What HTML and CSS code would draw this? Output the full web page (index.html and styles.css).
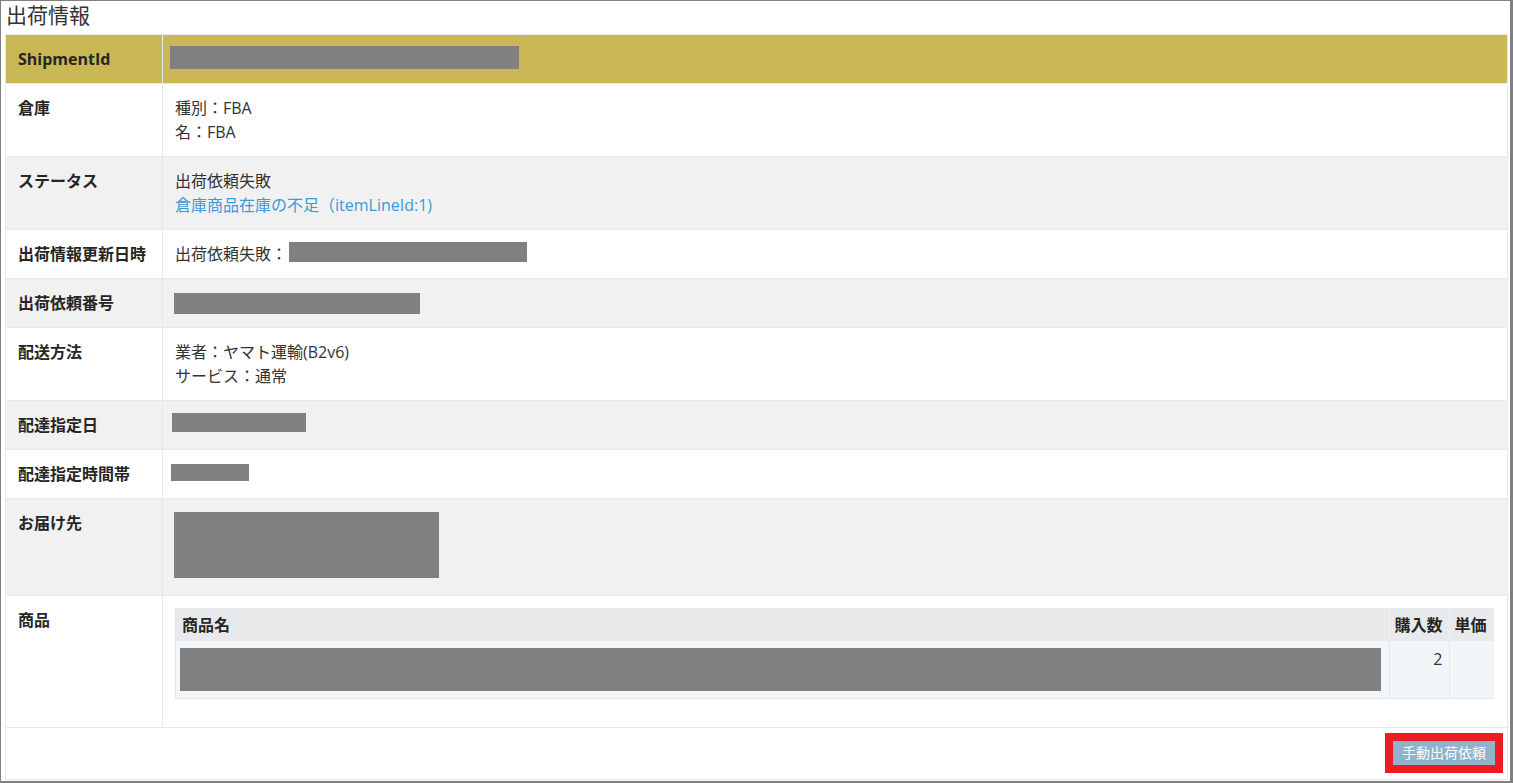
FILE: index.html
```html
<!DOCTYPE html>
<html lang="ja">
<head>
<meta charset="utf-8">
<title>出荷情報</title>
<link rel="stylesheet" href="styles.css">
</head>
<body>
<div class="frame">
  <h2 class="title">出荷情報</h2>
  <table class="info">
    <tr class="head-row">
      <th>ShipmentId</th>
      <td><span class="mask mask-shipment"></span></td>
    </tr>
    <tr>
      <th>倉庫</th>
      <td>種別：FBA<br>名：FBA</td>
    </tr>
    <tr class="alt">
      <th>ステータス</th>
      <td>出荷依頼失敗<br><a class="link" href="#">倉庫商品在庫の不足（itemLineId:1)</a></td>
    </tr>
    <tr>
      <th>出荷情報更新日時</th>
      <td>出荷依頼失敗：<span class="mask mask-updated"></span></td>
    </tr>
    <tr class="alt">
      <th>出荷依頼番号</th>
      <td><span class="mask mask-number"></span></td>
    </tr>
    <tr>
      <th>配送方法</th>
      <td>業者：ヤマト運輸(B2v6)<br>サービス：通常</td>
    </tr>
    <tr class="alt">
      <th>配達指定日</th>
      <td><span class="mask mask-date"></span></td>
    </tr>
    <tr>
      <th>配達指定時間帯</th>
      <td><span class="mask mask-time"></span></td>
    </tr>
    <tr class="alt">
      <th>お届け先</th>
      <td><span class="mask mask-address"></span></td>
    </tr>
    <tr>
      <th>商品</th>
      <td>
        <table class="items">
          <colgroup>
            <col>
            <col class="col-qty">
            <col class="col-price">
          </colgroup>
          <thead>
            <tr>
              <th>商品名</th>
              <th>購入数</th>
              <th>単価</th>
            </tr>
          </thead>
          <tbody>
            <tr>
              <td class="name-cell"><span class="mask mask-item"></span></td>
              <td class="num">2</td>
              <td></td>
            </tr>
          </tbody>
        </table>
      </td>
    </tr>
    <tr class="foot-row">
      <td colspan="2"><button class="btn-manual" type="button">手動出荷依頼</button></td>
    </tr>
  </table>
</div>
</body>
</html>
```

FILE: styles.css
```css
html, body {
  margin: 0;
  padding: 0;
  background: #ffffff;
}

body {
  font-family: "Open Sans", "Noto Sans CJK JP", sans-serif;
  color: #333333;
  font-size: 16px;
  line-height: 24px;
}

.frame {
  width: 1513px;
  height: 783px;
  box-sizing: border-box;
  border-style: solid;
  border-color: #808080;
  border-width: 1px 3px 2px 1px;
  padding: 0 2px 0 4px;
  overflow: hidden;
}

.title {
  margin: 0 0 5px 0;
  padding-left: 1px;
  font-size: 21px;
  line-height: 28px;
  font-weight: normal;
  color: #333333;
}

.info {
  width: 1503px;
  border-collapse: collapse;
  table-layout: fixed;
}

.info > tbody > tr > th,
.info > tbody > tr > td {
  border: 1px solid #e9e9e9;
  padding: 12px;
  vertical-align: top;
  text-align: left;
}

.info > tbody > tr > th {
  width: 132px;
  font-weight: bold;
  color: #262626;
}

.info > tbody > tr.alt > th,
.info > tbody > tr.alt > td {
  background: #f1f1f1;
}

.info > tbody > tr.head-row > th,
.info > tbody > tr.head-row > td {
  background: #cab857;
  vertical-align: middle;
}

.link {
  color: #3d9ad6;
  text-decoration: none;
}

.mask {
  display: block;
  background: #808080;
}

.mask-shipment {
  width: 349px;
  height: 23px;
  margin: -1px 0 2px -5px;
}

.mask-updated {
  display: inline-block;
  vertical-align: top;
  width: 238px;
  height: 20px;
  margin: 0 0 0 2px;
}

.mask-number {
  width: 246px;
  height: 21px;
  margin: 2px 0 1px -1px;
}

.mask-date {
  width: 134px;
  height: 19px;
  margin: 0 0 5px -3px;
}

.mask-time {
  width: 78px;
  height: 17px;
  margin: 2px 0 5px -4px;
}

.mask-address {
  width: 265px;
  height: 66px;
  margin: 1px 0 5px -1px;
}

.items {
  width: 1319px;
  border-collapse: collapse;
  table-layout: fixed;
  margin-bottom: 16px;
  border-bottom: 1px solid #e4e6e9;
  border-left: 1px solid #e4e6e9;
}

.col-qty {
  width: 60px;
}

.col-price {
  width: 45px;
}

.items th {
  background: #e8e9eb;
  font-weight: bold;
  color: #262626;
  text-align: left;
  padding: 5px 5px 4px 5px;
  white-space: nowrap;
  border-left: 1px solid #eef0f2;
}

.items th:first-child {
  border-left: none;
  padding-left: 6px;
}

.items td {
  background: #f3f6f9;
  padding: 6px 6px 7px 6px;
  vertical-align: top;
  border-left: 1px solid #e4e7ea;
}

.items td.name-cell {
  padding: 6px 8px 7px 4px;
  border-left: none;
}

.mask-item {
  height: 43px;
  margin-top: 1px;
}

.items td.num {
  text-align: right;
}

.info > tbody > tr.foot-row > td {
  text-align: right;
  padding: 13px 12px 14px 12px;
  background: #ffffff;
}

.btn-manual {
  display: inline-block;
  vertical-align: top;
  height: 24px;
  padding: 0 9px;
  border: none;
  background: #8fb3cb;
  color: #ffffff;
  font-family: "Open Sans", "Noto Sans CJK JP", sans-serif;
  font-size: 14px;
  line-height: 24px;
  outline: 8px solid #ed1c24;
  cursor: pointer;
}
```
